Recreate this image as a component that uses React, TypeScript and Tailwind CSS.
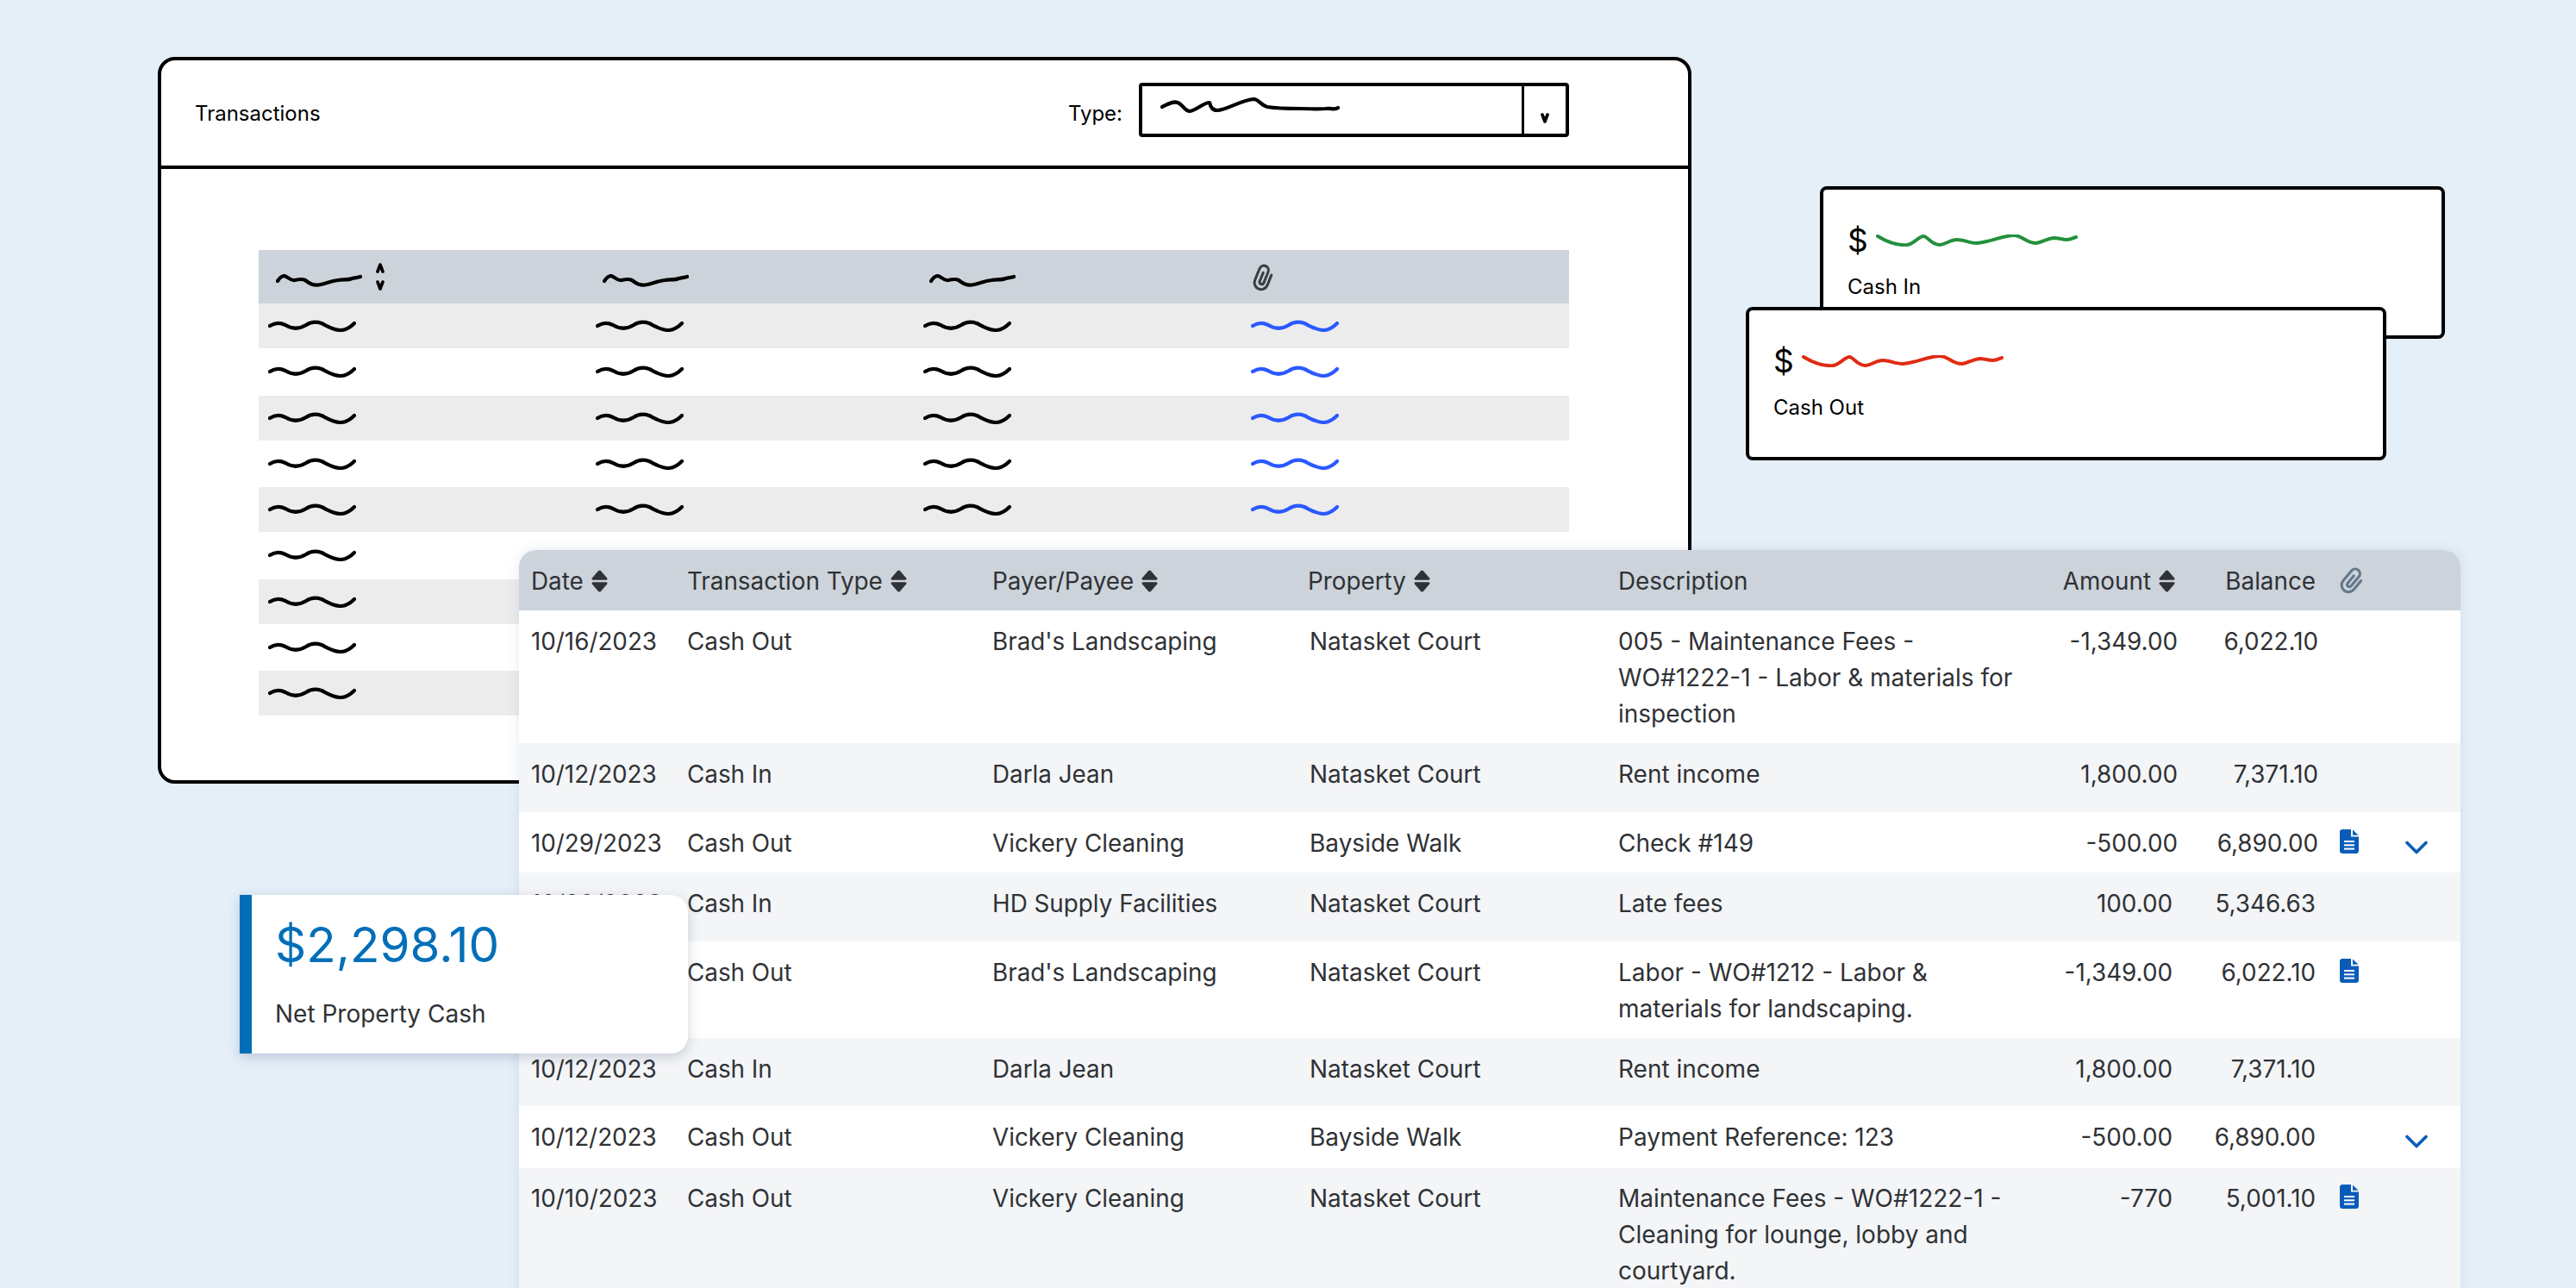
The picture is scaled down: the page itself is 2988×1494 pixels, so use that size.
type Row = {
  date: string;
  type: string;
  payer: string;
  property: string;
  desc: string;
  amount: string;
  balance: string;
  height: string;
  bg: string;
  top?: string;
  shift?: boolean;
  doc?: boolean;
  chevron?: boolean;
};

const rows: Row[] = [
  {
    date: "10/16/2023",
    type: "Cash Out",
    payer: "Brad's Landscaping",
    property: "Natasket Court",
    desc: "005 - Maintenance Fees - WO#1222-1 - Labor & materials for inspection",
    amount: "-1,349.00",
    balance: "6,022.10",
    height: "h-[154px]",
    bg: "bg-white",
  },
  {
    date: "10/12/2023",
    type: "Cash In",
    payer: "Darla Jean",
    property: "Natasket Court",
    desc: "Rent income",
    amount: "1,800.00",
    balance: "7,371.10",
    height: "h-[80px]",
    bg: "bg-[#f4f5f7]",
  },
  {
    date: "10/29/2023",
    type: "Cash Out",
    payer: "Vickery Cleaning",
    property: "Bayside Walk",
    desc: "Check #149",
    amount: "-500.00",
    balance: "6,890.00",
    height: "h-[70px]",
    bg: "bg-white",
    doc: true,
    chevron: true,
  },
  {
    date: "10/30/2023",
    type: "Cash In",
    payer: "HD Supply Facilities",
    property: "Natasket Court",
    desc: "Late fees",
    amount: "100.00",
    balance: "5,346.63",
    height: "h-[80px]",
    bg: "bg-[#f4f5f7]",
    shift: true,
  },
  {
    date: "10/16/2023",
    type: "Cash Out",
    payer: "Brad's Landscaping",
    property: "Natasket Court",
    desc: "Labor - WO#1212 - Labor & materials for landscaping.",
    amount: "-1,349.00",
    balance: "6,022.10",
    height: "h-[112px]",
    bg: "bg-white",
    shift: true,
    doc: true,
  },
  {
    date: "10/12/2023",
    type: "Cash In",
    payer: "Darla Jean",
    property: "Natasket Court",
    desc: "Rent income",
    amount: "1,800.00",
    balance: "7,371.10",
    height: "h-[79px]",
    bg: "bg-[#f4f5f7]",
    shift: true,
  },
  {
    date: "10/12/2023",
    type: "Cash Out",
    payer: "Vickery Cleaning",
    property: "Bayside Walk",
    desc: "Payment Reference: 123",
    amount: "-500.00",
    balance: "6,890.00",
    height: "h-[72px]",
    bg: "bg-white",
    shift: true,
    chevron: true,
  },
  {
    date: "10/10/2023",
    type: "Cash Out",
    payer: "Vickery Cleaning",
    property: "Natasket Court",
    desc: "Maintenance Fees - WO#1222-1 - Cleaning for lounge, lobby and courtyard.",
    amount: "-770",
    balance: "5,001.10",
    height: "h-[170px]",
    bg: "bg-[#f4f5f7]",
    top: "pt-[14px]",
    shift: true,
    doc: true,
  },
];

function WaveBody({ className }: { className: string }) {
  return (
    <svg viewBox="0 0 102 14" className={`h-[14px] w-[102px] ${className}`} fill="none" stroke="currentColor" strokeWidth="4.2" strokeLinecap="round">
      <path d="M2 7C8 3 14 3 20 6C28 11 36 11 44 6C50 2 56 2 62 4C70 8 76 12 84 12C90 12 96 8 100 4" />
    </svg>
  );
}

function WaveHead() {
  return (
    <svg viewBox="0 0 100 15" className="mt-2 h-[15px] w-[100px] text-black" fill="none" stroke="currentColor" strokeWidth="4.2" strokeLinecap="round">
      <path d="M2 8C4 5 7 2 10 2C14 3 17 8 22 7C26 6 30 5 34 7C39 11 44 14 52 12C60 10 64 8 72 7C78 6 84 7 88 5C92 4 95 4 98 3" />
    </svg>
  );
}

function WaveCash({ className }: { className: string }) {
  return (
    <svg viewBox="0 0 234 14" className={`h-[14px] w-[234px] ${className}`} fill="none" stroke="currentColor" strokeWidth="4" strokeLinecap="round">
      <path d="M2 2C12 8 24 13 36 12C44 11 50 2 55 2C60 2 64 12 74 12C82 11 86 6 94 6C102 6 108 10 117 10C132 9 148 1 160 1C170 1 174 10 186 10C193 9 198 5 206 4C212 4 216 6 221 6C226 6 229 4 232 3" />
    </svg>
  );
}

function Chev({ up }: { up?: boolean }) {
  return (
    <svg viewBox="0 0 12 12" className="h-[12px] w-[12px]" fill="none" stroke="black" strokeWidth="3.6" strokeLinecap="round" strokeLinejoin="round">
      <path d={up ? "M3 10L6 2L9 10" : "M3 2L6 10L9 2"} />
    </svg>
  );
}

function SortIcon() {
  return (
    <svg viewBox="0 0 19 26" className="h-[26px] w-[19px]" fill="#2f3236">
      <path d="M8.2 1L.8 9.6C.1 10.5.7 11.8 1.9 11.8H17.1C18.3 11.8 18.9 10.5 18.2 9.6L10.8 1C10.1.2 8.9.2 8.2 1Z" />
      <path d="M8.2 25L.8 16.4C.1 15.5.7 14.2 1.9 14.2H17.1C18.3 14.2 18.9 15.5 18.2 16.4L10.8 25C10.1 25.8 8.9 25.8 8.2 25Z" />
    </svg>
  );
}

function ClipIcon({ className }: { className: string }) {
  return (
    <svg viewBox="0 0 24 34" className={className} fill="none" stroke="currentColor" strokeWidth="3.2" strokeLinecap="round">
      <path d="M20 10V23A8 8 0 0 1 4 23V8A5.5 5.5 0 0 1 15 8V22A2.6 2.6 0 0 1 9.8 22V11" />
    </svg>
  );
}

function DocIcon() {
  return (
    <svg viewBox="0 0 22 28" className="h-[28px] w-[22px]">
      <path d="M3 0H13V8.5H22V25C22 26.7 20.7 28 19 28H3C1.3 28 0 26.7 0 25V3C0 1.3 1.3 0 3 0Z" fill="#0b5cb8" />
      <path d="M15 0.5L21.5 6.8H15Z" fill="#0b5cb8" />
      <rect x="5" y="13" width="12" height="2" fill="white" />
      <rect x="5" y="17.3" width="12" height="2" fill="white" />
      <rect x="5" y="21.6" width="12" height="2" fill="white" />
    </svg>
  );
}

function ChevronBlue() {
  return (
    <svg viewBox="0 0 26 16" className="h-[16px] w-[26px]" fill="none" stroke="#0b5cb8" strokeWidth="3.6" strokeLinecap="round" strokeLinejoin="round">
      <path d="M2 2.5L13 13.5L24 2.5" />
    </svg>
  );
}

function SortLabel({ label }: { label: string }) {
  return (
    <span className="flex items-center gap-[9px]">
      {label}
      <SortIcon />
    </span>
  );
}

function SketchTable() {
  const count = [0, 1, 2, 3, 4, 5, 6, 7, 8];
  return (
    <div className="w-[1520px]">
      <div className="grid h-[62px] grid-cols-[379px_379px_379px_383px] items-center bg-[#cdd3da] pl-[20px]">
        <div className="flex items-center gap-[15px]">
          <WaveHead />
          <div className="flex flex-col gap-[8px]">
            <Chev up />
            <Chev />
          </div>
        </div>
        <WaveHead />
        <WaveHead />
        <ClipIcon className="-ml-[4px] mt-[2px] h-[33px] w-[24px] rotate-[22deg] text-[#3c3f42]" />
      </div>
      {count.map((i) => (
        <div key={i} className={`grid grid-cols-[380px_380px_380px_1fr] items-center pl-[11px] ${i % 2 === 0 ? "h-[52px] bg-[#ececec]" : "h-[54.5px] bg-white"}`}>
          <WaveBody className="text-black" />
          {i < 5 && <WaveBody className="text-black" />}
          {i < 5 && <WaveBody className="text-black" />}
          {i < 5 && <WaveBody className="text-[#2b59ff]" />}
        </div>
      ))}
    </div>
  );
}

function SketchCard() {
  return (
    <div className="absolute top-[66px] left-[183px] h-[843px] w-[1779px] rounded-[20px] border-[4px] border-black bg-white">
      <div className="flex h-[126px] items-center justify-between border-b-[4px] border-black pt-[2px] pr-[138px] pl-[39px] text-[24px] text-black">
        <span>Transactions</span>
        <div className="flex items-center gap-[19px]">
          <span>Type:</span>
          <div className="mb-[10px] flex h-[63px] w-[499px] rounded-[4px] border-[4px] border-black">
            <div className="flex-1 pt-[13px] pl-[21px]">
              <svg viewBox="0 0 210 20" className="h-[20px] w-[210px]" fill="none" stroke="black" strokeWidth="4.2" strokeLinecap="round" strokeLinejoin="round">
                <path d="M2 11C8 8 14 4 20 6C26 8 28 16 34 16C42 15 50 6 57 6C58 11 60 15 66 15C76 15 96 2 109 2C115 3 116 9 124 11C136 13 150 13 162 13C174 13 182 14 192 13C198 12 202 15 206 12" />
              </svg>
            </div>
            <div className="flex w-[51px] items-start justify-center border-l-[3px] border-black pt-[31px]">
              <Chev />
            </div>
          </div>
        </div>
      </div>
      <div className="pt-[94px] pl-[113px]">
        <SketchTable />
      </div>
    </div>
  );
}

function CashCard({ position, label, wave }: { position: string; label: string; wave: string }) {
  return (
    <div className={`absolute rounded-[8px] border-[4px] border-black bg-white text-black ${position}`}>
      <div className="flex items-center gap-[9px] text-[37px] leading-[44px]">
        <span>$</span>
        <WaveCash className={wave} />
      </div>
      <div className="mt-[17px] text-[24px] leading-[30px]">{label}</div>
    </div>
  );
}

function MainTable() {
  return (
    <div className="absolute top-[638px] left-[602px] w-[2252px] overflow-hidden rounded-t-[20px] bg-white text-[27.8px] leading-[42px] text-[#2f3236] shadow-[0_0_14px_rgba(120,140,170,0.18)]">
      <div className="flex h-[70px] items-center bg-[#cdd3da] pt-[2px] pl-[14px]">
        <div className="w-[181px]"><SortLabel label="Date" /></div>
        <div className="w-[354px]"><SortLabel label="Transaction Type" /></div>
        <div className="w-[366px]"><SortLabel label="Payer/Payee" /></div>
        <div className="w-[360px]"><SortLabel label="Property" /></div>
        <div className="w-[464px]">Description</div>
        <div className="flex w-[182px] justify-end"><SortLabel label="Amount" /></div>
        <div className="w-[163px] text-right">Balance</div>
        <div className="pl-[30px]">
          <ClipIcon className="h-[34px] w-[24px] rotate-[40deg] text-[#64798a]" />
        </div>
      </div>
      {rows.map((r, i) => (
        <div key={i} className={`flex pl-[14px] ${r.top ?? "pt-[15px]"} ${r.height} ${r.bg}`}>
          <div className="w-[181px]">{r.date}</div>
          <div className="w-[354px]">{r.type}</div>
          <div className="w-[368px]">{r.payer}</div>
          <div className="w-[358px] text-[28px]">{r.property}</div>
          <div className="w-[464px] pr-[2px] text-[28px]">{r.desc}</div>
          <div className={`w-[185px] text-right ${r.shift ? "pr-[6px]" : ""}`}>{r.amount}</div>
          <div className={`w-[163px] text-right ${r.shift ? "pr-[3px]" : ""}`}>{r.balance}</div>
          <div className="w-[101px] pt-[5px] pl-[25px]">{r.doc && <DocIcon />}</div>
          <div className="pt-[18px]">{r.chevron && <ChevronBlue />}</div>
        </div>
      ))}
    </div>
  );
}

function NetCard() {
  return (
    <div className="absolute top-[1038px] left-[278px] h-[184px] w-[520px] rounded-r-[20px] border-l-[14px] border-[#006fb8] bg-white pl-[27px] shadow-[0_4px_14px_rgba(60,80,110,0.25)]">
      <div className="pt-[25px] text-[56.5px] leading-[66px] text-[#006fb8]">$2,298.10</div>
      <div className="mt-[29px] text-[28px] leading-[36px] text-[#2f3236]">Net Property Cash</div>
    </div>
  );
}

export default function App() {
  return (
    <div className="relative h-[1494px] w-[2988px] overflow-hidden bg-[#e4eff8] font-['Inter',sans-serif]">
      <SketchCard />
      <CashCard position="top-[216px] left-[2111px] h-[177px] w-[725px] pt-[37px] pl-[28px]" label="Cash In" wave="text-[#22913c]" />
      <CashCard position="top-[356px] left-[2025px] h-[178px] w-[743px] pt-[37px] pl-[28px]" label="Cash Out" wave="text-[#e02b12]" />
      <MainTable />
      <NetCard />
    </div>
  );
}
